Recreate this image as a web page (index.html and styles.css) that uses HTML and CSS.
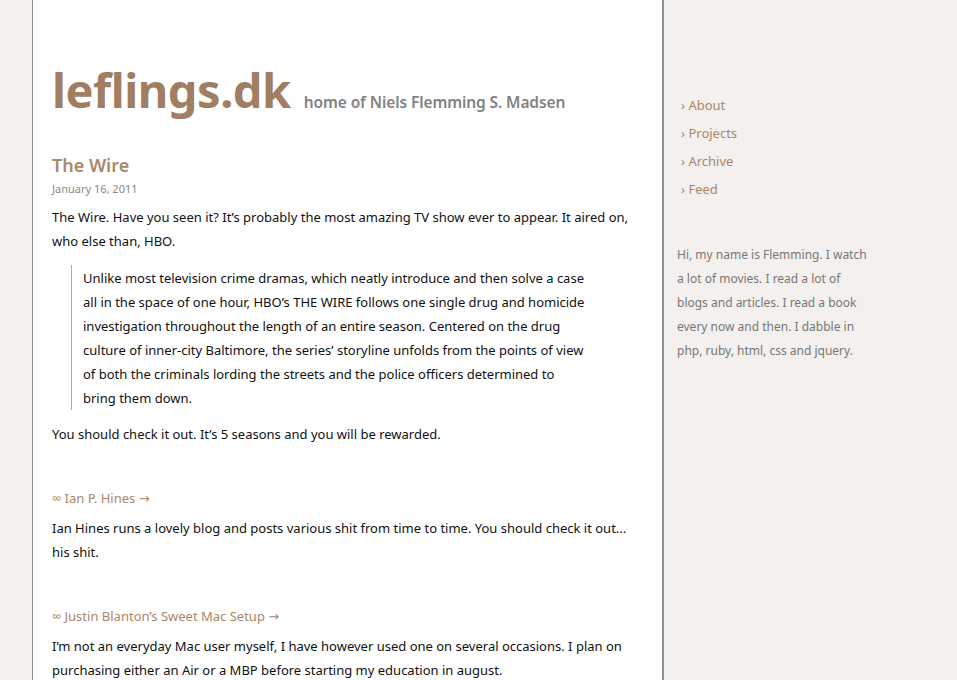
FILE: index.html
```html
<!DOCTYPE html>
<html>
<head>
<meta charset="utf-8">
<link rel="stylesheet" href="styles.css">
</head>
<body>
<div class="page">
  <main class="main">
    <header class="masthead">
      <h1 class="site-title">leflings.dk</h1>
      <span class="site-sub">home of Niels Flemming S. Madsen</span>
    </header>

    <article class="post">
      <h2 class="post-title">The Wire</h2>
      <div class="post-date">January 16, 2011</div>
      <p>The Wire. Have you seen it? It’s probably the most amazing TV show ever to appear. It aired on, who else than, HBO.</p>
      <blockquote>Unlike most television crime dramas, which neatly introduce and then solve a case all in the space of one hour, HBO’s THE WIRE follows one single drug and homicide investigation throughout the length of an entire season. Centered on the drug culture of inner-city Baltimore, the series’ storyline unfolds from the points of view of both the criminals lording the streets and the police officers determined to bring them down.</blockquote>
      <p>You should check it out. It’s 5 seasons and you will be rewarded.</p>
    </article>

    <article class="post link-post">
      <a class="link-title" href="#">∞ Ian P. Hines <span class="arrow">→</span></a>
      <p>Ian Hines runs a lovely blog and posts various shit from time to time. You should check it out... his shit.</p>
    </article>

    <article class="post link-post">
      <a class="link-title" href="#">∞ Justin Blanton’s Sweet Mac Setup <span class="arrow">→</span></a>
      <p>I’m not an everyday Mac user myself, I have however used one on several occasions. I plan on purchasing either an Air or a MBP before starting my education in august.</p>
    </article>
  </main>

  <aside class="sidebar">
    <nav class="nav">
      <a href="#">› About</a>
      <a href="#">› Projects</a>
      <a href="#">› Archive</a>
      <a href="#">› Feed</a>
    </nav>
    <p class="about">Hi, my name is Flemming. I watch a lot of movies. I read a lot of blogs and articles. I read a book every now and then. I dabble in php, ruby, html, css and jquery.</p>
  </aside>
</div>
</body>
</html>
```

FILE: styles.css
```css
html, body {
  margin: 0;
  padding: 0;
  height: 100%;
}
body {
  background: #f3f0ed;
  font-family: "Noto Sans", "Open Sans", sans-serif;
  color: #111;
  font-size: 13px;
  line-height: 24px;
}
.page {
  display: flex;
  align-items: stretch;
  min-height: 100%;
  padding-left: 32px;
}
.main {
  width: 590px;
  flex: none;
  background: #fff;
  border-left: 1px solid #8c8c8c;
  border-right: 2px solid #8f8f8f;
  padding: 60px 20px 0 19px;
  overflow: hidden;
}
.masthead {
  display: flex;
  align-items: baseline;
  gap: 13px;
  margin: 0 0 33px;
}
.site-title {
  margin: 0;
  font-size: 47px;
  line-height: 60px;
  font-weight: bold;
  color: #a07e62;
  letter-spacing: -0.5px;
}
.site-sub {
  font-size: 15.5px;
  font-weight: 600;
  color: #828282;
  letter-spacing: -0.1px;
}
.post-title {
  margin: 0;
  font-size: 18px;
  line-height: 24px;
  font-weight: 600;
  color: #a8876b;
}
.post-date {
  font-size: 11px;
  line-height: 24px;
  color: #888;
  margin-bottom: 4px;
}
.post p {
  margin: 0 0 12px;
}
blockquote {
  margin: 0 0 12px 19px;
  padding: 1px 52px 0 11px;
  border-left: 1px solid #aaa;
}
.link-post {
  margin-top: 40px;
}
.link-title {
  display: block;
  color: #a8876b;
  text-decoration: none;
  margin-top: 1px;
  margin-bottom: 5px;
}
.arrow {
  font-family: "DejaVu Sans", sans-serif;
  font-size: 13px;
}
.sidebar {
  padding: 93px 0 0 17px;
  width: 190px;
}
.nav {
  display: flex;
  flex-direction: column;
  gap: 4px;
  margin-bottom: 42px;
}
.nav a {
  color: #a8876b;
  text-decoration: none;
  font-size: 13px;
  line-height: 24px;
}
.about {
  margin: 0 0 0 -4px;
  font-size: 12px;
  line-height: 24px;
  color: #777;
}
```
